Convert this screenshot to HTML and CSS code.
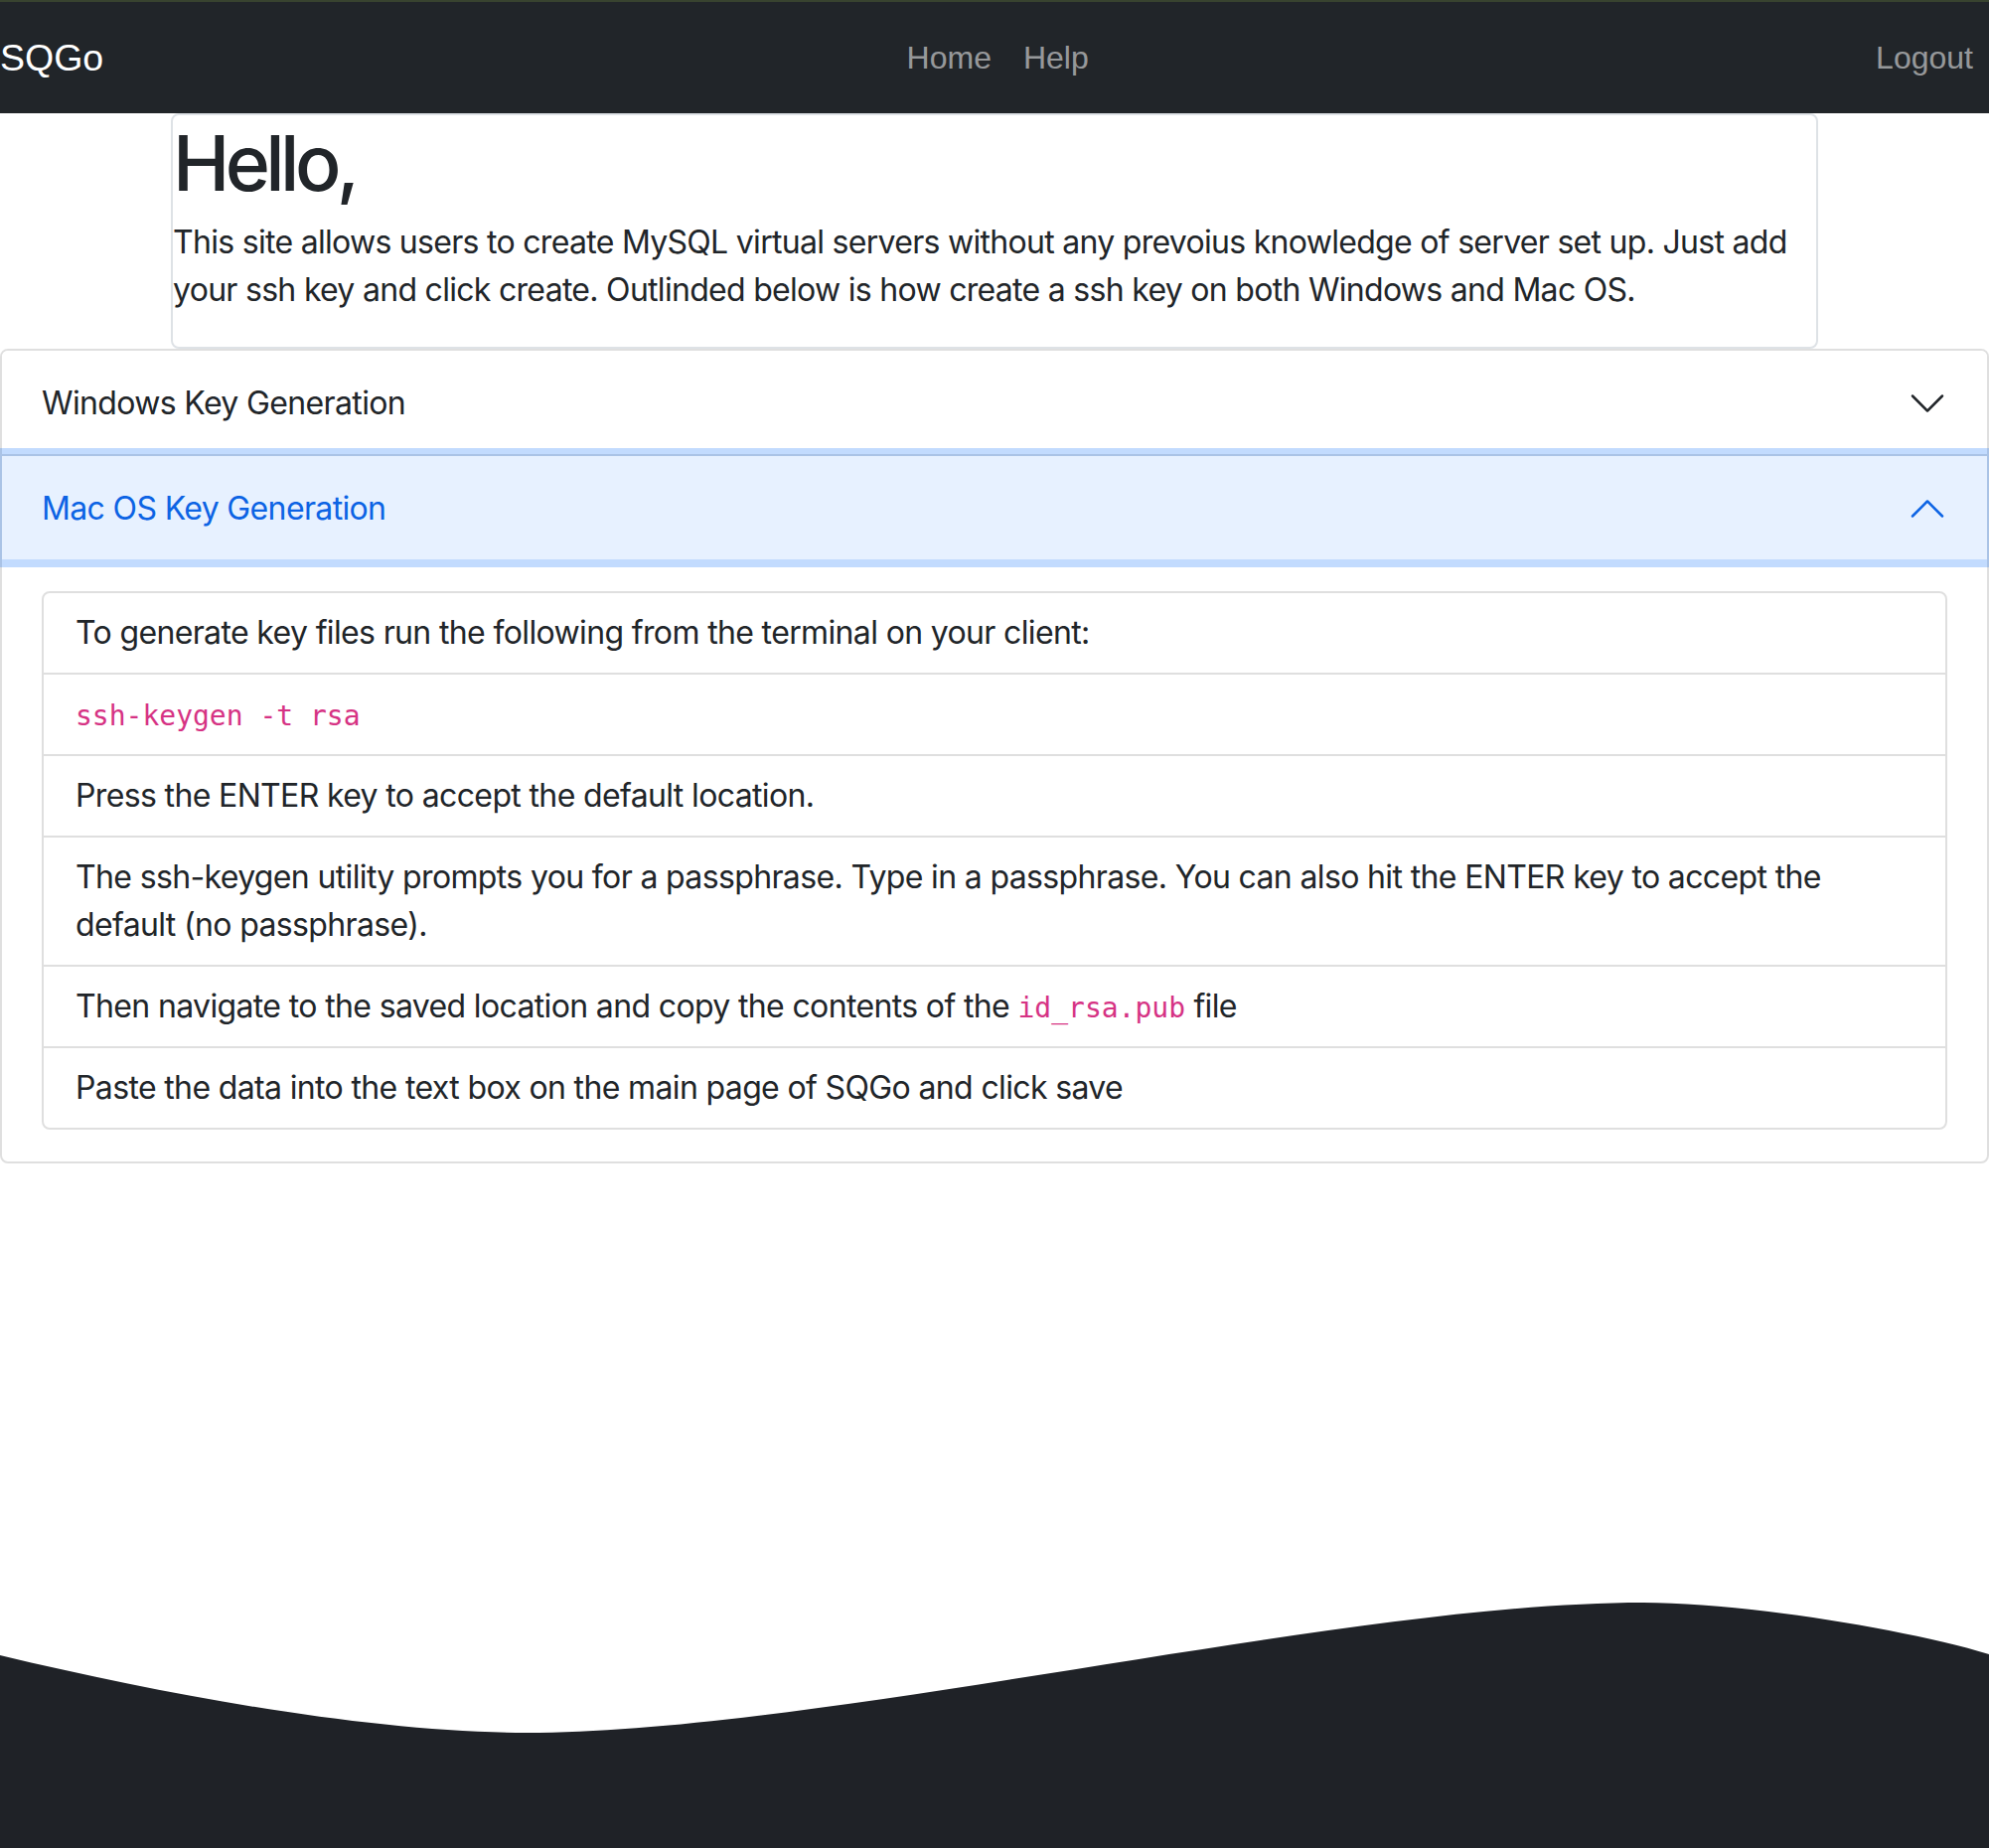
FILE: index.html
```html
<!DOCTYPE html>
<html lang="en">
<head>
<meta charset="utf-8">
<title>SQGo</title>
<link rel="stylesheet" href="styles.css">
</head>
<body>
<div class="page">
  <nav class="navbar">
    <a class="brand" href="#">SQGo</a>
    <ul class="nav nav-center">
      <li><a class="nav-link" href="#">Home</a></li>
      <li><a class="nav-link" href="#">Help</a></li>
    </ul>
    <ul class="nav">
      <li><a class="nav-link" href="#">Logout</a></li>
    </ul>
  </nav>

  <section class="intro">
    <h1 class="intro-title">Hello,</h1>
    <p class="intro-text">This site allows users to create MySQL virtual servers without any prevoius knowledge of server set up. Just add your ssh key and click create. Outlinded below is how create a ssh key on both Windows and Mac OS.</p>
  </section>

  <div class="accordion">
    <div class="accordion-item">
      <button class="accordion-button collapsed" type="button">
        <span>Windows Key Generation</span>
        <svg class="chevron" viewBox="0 0 16 16" aria-hidden="true"><path fill-rule="evenodd" d="M1.646 4.646a.5.5 0 0 1 .708 0L8 10.293l5.646-5.647a.5.5 0 0 1 .708.708l-6 6a.5.5 0 0 1-.708 0l-6-6a.5.5 0 0 1 0-.708z"/></svg>
      </button>
    </div>
    <div class="accordion-item">
      <button class="accordion-button active" type="button">
        <span>Mac OS Key Generation</span>
        <svg class="chevron up" viewBox="0 0 16 16" aria-hidden="true"><path fill-rule="evenodd" d="M1.646 4.646a.5.5 0 0 1 .708 0L8 10.293l5.646-5.647a.5.5 0 0 1 .708.708l-6 6a.5.5 0 0 1-.708 0l-6-6a.5.5 0 0 1 0-.708z"/></svg>
      </button>
      <div class="accordion-body">
        <ul class="list-group">
          <li class="list-item">To generate key files run the following from the terminal on your client:</li>
          <li class="list-item"><code>ssh-keygen -t rsa</code></li>
          <li class="list-item">Press the ENTER key to accept the default location.</li>
          <li class="list-item">The ssh-keygen utility prompts you for a passphrase. Type in a passphrase. You can also hit the ENTER key to accept the default (no passphrase).</li>
          <li class="list-item">Then navigate to the saved location and copy the contents of the <code>id_rsa.pub</code> file</li>
          <li class="list-item">Paste the data into the text box on the main page of SQGo and click save</li>
        </ul>
      </div>
    </div>
  </div>

  <footer class="footer">
    <svg class="wave" viewBox="0 0 2002 260" preserveAspectRatio="none" aria-hidden="true">
      <path d="M0,66 C180,109 380,144 530,144 C830,144 1354,13 1654,13 C1754,13 1920,40 2002,65 L2002,260 L0,260 Z"/>
    </svg>
  </footer>
</div>
</body>
</html>
```

FILE: styles.css
```css
* { box-sizing: border-box; }

html, body {
  margin: 0;
  padding: 0;
}

body {
  font-family: Inter, "Noto Sans", sans-serif;
  font-size: 32px;
  line-height: 48px;
  letter-spacing: -0.02em;
  color: #212529;
  background: #fff;
}

.page {
  min-height: 100vh;
  display: flex;
  flex-direction: column;
}

/* Navbar */
.navbar {
  display: flex;
  align-items: center;
  height: 114px;
  background: #212529;
  border-top: 2px solid #38432f;
  font-family: "Liberation Sans", Arial, sans-serif;
  letter-spacing: 0;
}

.brand {
  font-size: 37.5px;
  line-height: 60px;
  color: #fff;
  text-decoration: none;
  margin-right: 32px;
}

.nav {
  display: flex;
  list-style: none;
  margin: 0;
  padding: 0;
}

.nav-center {
  margin-left: auto;
  margin-right: auto;
}

.nav-link {
  display: block;
  padding: 0 16px;
  font-size: 32px;
  line-height: 48px;
  color: rgba(255, 255, 255, 0.55);
  text-decoration: none;
}

/* Intro card */
.intro {
  width: 1658px;
  margin: 0 auto;
  border: 2px solid #dee2e6;
  border-radius: 8px;
  padding: 0;
}

.intro-title {
  margin: 0 0 8px;
  font-size: 77px;
  line-height: 96px;
  font-weight: 500;
  letter-spacing: -0.06em;
}

.intro-text {
  margin: 0 0 33px;
  letter-spacing: -0.022em;
}

/* Accordion */
.accordion {
  border: 2px solid rgba(0, 0, 0, 0.125);
  border-radius: 8px;
}

.accordion-item + .accordion-item {
  border-top: 2px solid rgba(0, 0, 0, 0.125);
}

.accordion-button {
  position: relative;
  display: flex;
  align-items: center;
  width: 100%;
  padding: 29px 40px 27px;
  border: 0;
  background: #fff;
  font: inherit;
  letter-spacing: inherit;
  color: #212529;
  text-align: left;
  cursor: pointer;
  border-radius: 6px 6px 0 0;
}

.accordion-button.active {
  z-index: 3;
  color: #0c63e4;
  background: #e7f1ff;
  border-radius: 0;
  box-shadow: 0 0 0 8px rgba(13, 110, 253, 0.25);
}

.chevron {
  flex-shrink: 0;
  width: 40px;
  height: 40px;
  margin-left: auto;
  fill: #212529;
}

.chevron.up {
  transform: rotate(180deg);
  fill: #0c63e4;
}

.accordion-body {
  padding: 32px 40px;
}

.list-group {
  list-style: none;
  margin: 0;
  padding: 0;
  border: 2px solid rgba(0, 0, 0, 0.125);
  border-radius: 8px;
}

.list-item {
  padding: 16px 32px;
}

.list-item + .list-item {
  border-top: 2px solid rgba(0, 0, 0, 0.125);
}

code {
  font-family: "DejaVu Sans Mono", "Liberation Mono", monospace;
  font-size: 28px;
  line-height: 1;
  letter-spacing: 0;
  color: #d63384;
}

/* Footer wave */
.footer {
  margin-top: auto;
  height: 260px;
  line-height: 0;
}

.wave {
  display: block;
  width: 100%;
  height: 260px;
  fill: #1f2227;
}
```
